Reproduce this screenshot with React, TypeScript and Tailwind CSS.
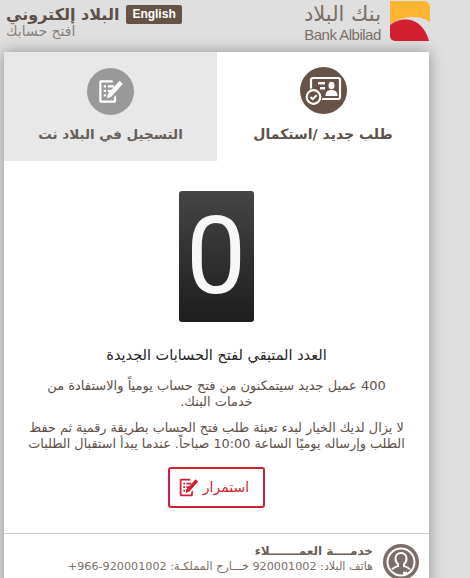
function RegisterIcon({ color }: { color: string }) {
  return (
    <svg viewBox="0 0 24 24" className="h-full w-full">
      <path
        d="M14 2H3.500A1.500 1.500 0 0 0 2 3.500v17A1.500 1.500 0 0 0 3.500 22h12a1.500 1.500 0 0 0 1.500-1.500V15l-2 2.300v2.700H4V4h10z"
        fill={color}
      />
      <path d="M6 6.500h2v2H6zM9.500 6.500H15v2H9.500zM6 10.500h2v2H6zM9.500 10.500H13v2H9.500zM6 14.500h2v2H6zM9.500 14.500H10.500v2H9.500z" fill={color} />
      <path d="M20 2.500l3 2.600-10 11.400-4 1.700.8-4.200z" fill={color} />
    </svg>
  );
}

function IdCardIcon() {
  return (
    <svg viewBox="0 0 47 47" className="h-[47px] w-[47px]">
      <circle cx="23.500" cy="23.500" r="23.500" fill="#665346" />
      <rect x="11" y="11" width="29" height="21" rx="2" fill="none" stroke="#fff" strokeWidth="2.200" />
      <path d="M18 15h7v2.400h-7zM20 20h5v2.400h-5z" fill="#fff" />
      <ellipse cx="31.500" cy="18.500" rx="3" ry="3.800" fill="#fff" />
      <path d="M25.500 29c0-4.500 2.500-6 6-6s6 1.500 6 6z" fill="#fff" />
      <circle cx="13.500" cy="30" r="9" fill="#665346" />
      <circle cx="13.500" cy="30" r="6.800" fill="none" stroke="#fff" strokeWidth="2.200" />
      <path d="M10.500 30l2.200 2.200 4-4" fill="none" stroke="#fff" strokeWidth="2" />
    </svg>
  );
}

function AgentIcon() {
  return (
    <svg viewBox="0 0 36 36" className="h-9 w-9 shrink-0">
      <circle cx="18" cy="18" r="18" fill="#7b6e66" />
      <circle cx="18" cy="18" r="13.500" fill="none" stroke="#fff" strokeWidth="2" />
      <path d="M18 9c-3.500 0-5.500 2.500-5.500 5.500 0 2.500 1 4.500 2.500 5.500v2c-2 .8-4.500 1.500-6 3.500M18 9c3.500 0 5.500 2.500 5.500 5.500 0 2.500-1 4.500-2.500 5.500v2c2 .8 4.500 1.500 6 3.500" fill="none" stroke="#fff" strokeWidth="2" />
      <path d="M20 29h4" stroke="#fff" strokeWidth="2.500" />
    </svg>
  );
}

export default function App() {
  return (
    <div dir="rtl" className="h-[578px] w-[470px] overflow-hidden bg-[#dfdfdf] font-['DejaVu_Sans','Liberation_Sans',sans-serif]">
      {/* Header */}
      <header dir="ltr" className="flex h-[52px] items-start justify-between pl-[6px] pr-[40px]">
        <div className="pt-[5px]">
          <div className="flex items-center gap-[7px]">
            <span dir="rtl" className="text-[16px] leading-[19px] font-bold text-[#5e5048]">البلاد إلكتروني</span>
            <span className="rounded-[2px] bg-[#665346] px-[6px] font-['Liberation_Sans',sans-serif] text-[12px] leading-[19px] font-bold text-white">English</span>
          </div>
          <div dir="rtl" className="w-fit text-[14px] leading-[15px] text-[#8a8079]">افتح حسابك</div>
        </div>
        <div className="flex gap-[9px] pt-[1px]">
          <div className="text-center text-[#7b6e66]">
            <div dir="rtl" className="text-[21px] leading-[26px]">بنك البلاد</div>
            <div className="font-['Liberation_Sans',sans-serif] text-[15px] leading-[15px] tracking-[-0.5px]">Bank Albilad</div>
          </div>
          <svg viewBox="0 0 40 40" className="h-[40px] w-[40px]">
            <path d="M0 0h34a6 6 0 0 1 6 6v15C30 14 14 14 0 23z" fill="#fbb532" />
            <path d="M0 24C8 17 31 12 39 40H5a5 5 0 0 1-5-5z" fill="#d21f30" />
          </svg>
        </div>
      </header>

      {/* Card */}
      <main className="mr-[41px] ml-[4px] bg-white shadow-[0_0_14px_rgba(0,0,0,0.35)]">
        <div className="grid h-[109px] grid-cols-[212px_1fr]">
          <div className="flex flex-col items-center pt-[15px]">
            <IdCardIcon />
            <div className="mt-[10px] text-[14px] leading-[20px] font-bold text-[#5e5048]">طلب جديد /استكمال</div>
          </div>
          <div className="flex flex-col items-center bg-[#e8e8e8] pt-[16px]">
            <div className="h-[47px] w-[47px] rounded-full bg-[#999] p-[10px]">
              <RegisterIcon color="#fff" />
            </div>
            <div className="mt-[9px] text-[13.500px] leading-[20px] font-bold text-[#665f5a]">التسجيل في البلاد نت</div>
          </div>
        </div>

        <div className="flex flex-col items-center px-[20px] pt-[30px]">
          <div className="mr-[1px] flex h-[131px] w-[75px] items-center justify-center rounded-[3px] bg-gradient-to-b from-[#454545] to-[#1e1e1e] font-['Roboto',sans-serif] text-[107px] leading-none text-[#f7f7f7]">
            0
          </div>
          <h1 className="mt-[23px] text-[14.500px] leading-[20px] font-normal text-[#222]">العدد المتبقي لفتح الحسابات الجديدة</h1>
          <p className="mt-[13px] px-[20px] text-center text-[13px] leading-[16px] text-[#5e5048]">
            400 عميل جديد سيتمكنون من فتح حساب يومياً والاستفادة من خدمات البنك.
          </p>
          <p className="mt-[10px] text-center text-[12.800px] leading-[16px] text-[#5e5048]">
            لا يزال لديك الخيار لبدء تعبئة طلب فتح الحساب بطريقة رقمية ثم حفظ الطلب وإرساله يوميًا الساعة 10:00 صباحاً. عندما يبدأ استقبال الطلبات
          </p>
          <button className="mt-[15px] flex h-[41px] w-[97px] items-center justify-center gap-[4px] rounded-[3px] border-2 border-[#d21f30] pr-[6px] text-[14px] text-[#d21f30]">
            <span>استمرار</span>
            <span className="h-[21px] w-[21px]"><RegisterIcon color="#d21f30" /></span>
          </button>
        </div>

        <div className="mt-[25px] flex gap-[10px] border-t border-[#ccc] pt-[10px] pr-[10px] pb-[10px]">
          <AgentIcon />
          <div>
            <div className="text-[12px] leading-[15px] font-bold text-[#6b5f58]">خدمــــة العمـــــــلاء</div>
            <div className="text-[11.200px] leading-[15px] text-[#7b6e66]">هاتف البلاد: 920001002 خـــارج المملكـة: 920001002-966+</div>
          </div>
        </div>
      </main>
    </div>
  );
}
